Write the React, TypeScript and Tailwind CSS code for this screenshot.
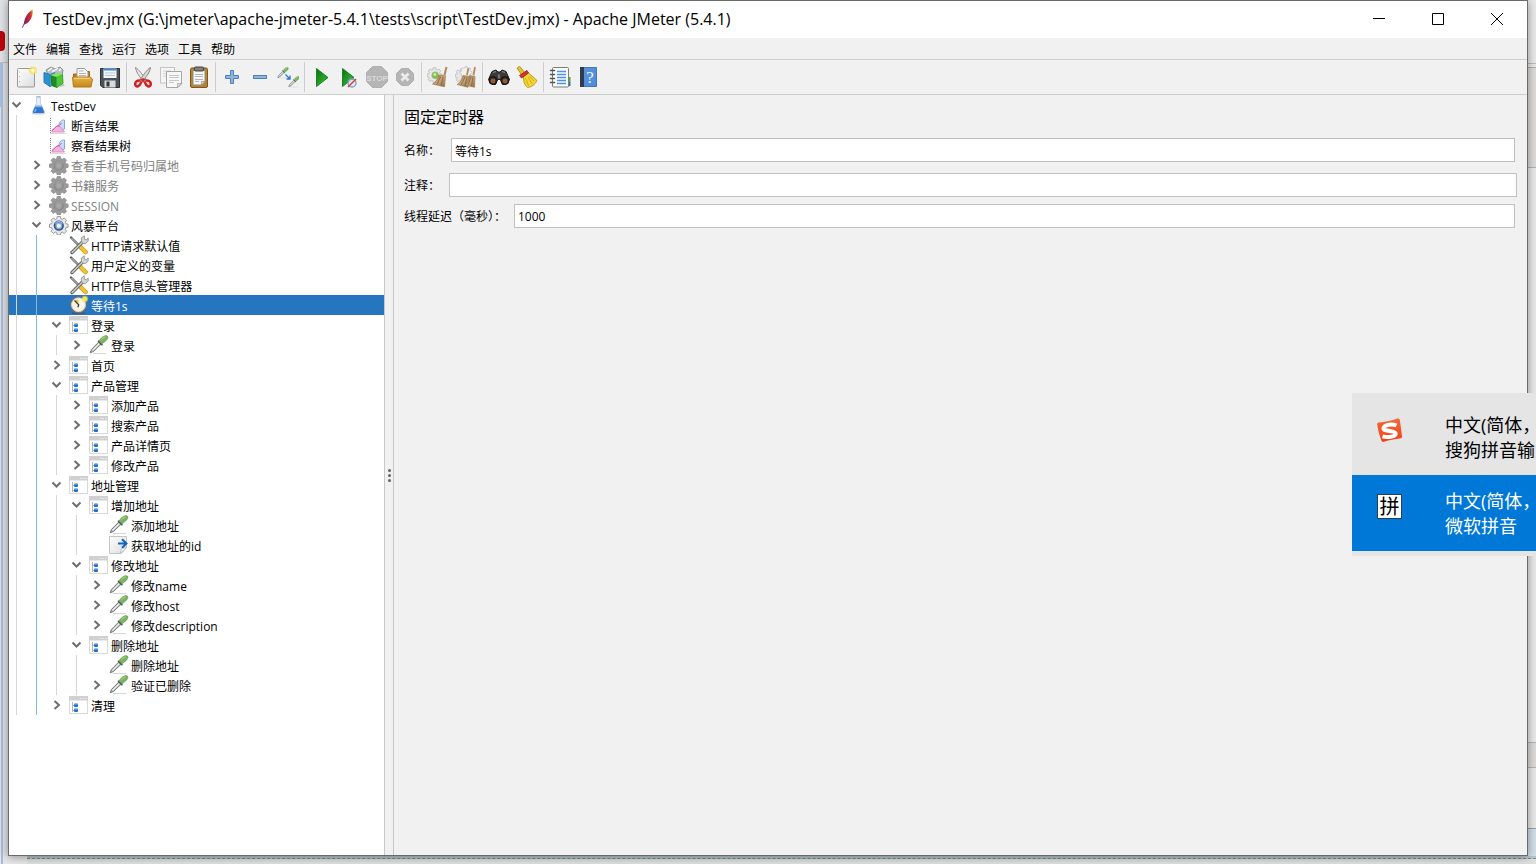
import React from 'react';

type IconName =
  | 'flask' | 'chart' | 'gear' | 'gearOff' | 'tools' | 'clock' | 'controller' | 'pipette' | 'extract';

type TreeItem = { depth: number; icon: IconName; label: string; state?: 'open' | 'closed'; off?: boolean; selected?: boolean };

const items: TreeItem[] = [
  { depth: 0, icon: 'flask', label: 'TestDev', state: 'open' },
  { depth: 1, icon: 'chart', label: '断言结果' },
  { depth: 1, icon: 'chart', label: '察看结果树' },
  { depth: 1, icon: 'gearOff', label: '查看手机号码归属地', state: 'closed', off: true },
  { depth: 1, icon: 'gearOff', label: '书籍服务', state: 'closed', off: true },
  { depth: 1, icon: 'gearOff', label: 'SESSION', state: 'closed', off: true },
  { depth: 1, icon: 'gear', label: '风暴平台', state: 'open' },
  { depth: 2, icon: 'tools', label: 'HTTP请求默认值' },
  { depth: 2, icon: 'tools', label: '用户定义的变量' },
  { depth: 2, icon: 'tools', label: 'HTTP信息头管理器' },
  { depth: 2, icon: 'clock', label: '等待1s', selected: true },
  { depth: 2, icon: 'controller', label: '登录', state: 'open' },
  { depth: 3, icon: 'pipette', label: '登录', state: 'closed' },
  { depth: 2, icon: 'controller', label: '首页', state: 'closed' },
  { depth: 2, icon: 'controller', label: '产品管理', state: 'open' },
  { depth: 3, icon: 'controller', label: '添加产品', state: 'closed' },
  { depth: 3, icon: 'controller', label: '搜索产品', state: 'closed' },
  { depth: 3, icon: 'controller', label: '产品详情页', state: 'closed' },
  { depth: 3, icon: 'controller', label: '修改产品', state: 'closed' },
  { depth: 2, icon: 'controller', label: '地址管理', state: 'open' },
  { depth: 3, icon: 'controller', label: '增加地址', state: 'open' },
  { depth: 4, icon: 'pipette', label: '添加地址' },
  { depth: 4, icon: 'extract', label: '获取地址的id' },
  { depth: 3, icon: 'controller', label: '修改地址', state: 'open' },
  { depth: 4, icon: 'pipette', label: '修改name', state: 'closed' },
  { depth: 4, icon: 'pipette', label: '修改host', state: 'closed' },
  { depth: 4, icon: 'pipette', label: '修改description', state: 'closed' },
  { depth: 3, icon: 'controller', label: '删除地址', state: 'open' },
  { depth: 4, icon: 'pipette', label: '删除地址' },
  { depth: 4, icon: 'pipette', label: '验证已删除', state: 'closed' },
  { depth: 2, icon: 'controller', label: '清理', state: 'closed' },
];

const menus = ['文件', '编辑', '查找', '运行', '选项', '工具', '帮助'];

const gearPath =
  'M8.3 1h3.4l.5 2.4 1.6.7 2.1-1.4 2.4 2.4-1.4 2.1.7 1.6 2.4.5v3.4l-2.4.5-.7 1.6 1.4 2.1-2.4 2.4-2.1-1.4-1.6.7-.5 2.4H8.3l-.5-2.4-1.6-.7-2.1 1.4-2.4-2.4 1.4-2.1-.7-1.6L0 12.7V9.300l2.400-.5.7-1.600L1.700 5.100 4.100 2.700l2.100 1.400 1.600-.7z';

function Gradients() {
  return (
    <svg width="0" height="0" className="absolute" aria-hidden="true">
      <defs>
        <linearGradient id="feather" x1="0" y1="1" x2="1" y2="0">
          <stop offset="0" stopColor="#5c2d7c" /><stop offset=".4" stopColor="#c41f45" /><stop offset=".65" stopColor="#d9302c" /><stop offset="1" stopColor="#f7a823" />
        </linearGradient>
        <linearGradient id="paper" x1="0" y1="0" x2="1" y2="1">
          <stop offset="0" stopColor="#ffffff" /><stop offset="1" stopColor="#dcdcdc" />
        </linearGradient>
        <linearGradient id="play" x1="0" y1="0" x2="1" y2="1">
          <stop offset="0" stopColor="#0c6b12" /><stop offset=".6" stopColor="#2aa52c" /><stop offset="1" stopColor="#0b7a12" />
        </linearGradient>
        <linearGradient id="folder" x1="0" y1="0" x2="0" y2="1">
          <stop offset="0" stopColor="#e9b446" /><stop offset="1" stopColor="#c4861a" />
        </linearGradient>
        <linearGradient id="broom" x1="0" y1="0" x2="1" y2="1">
          <stop offset="0" stopColor="#8f6a43" /><stop offset=".5" stopColor="#c9a578" /><stop offset="1" stopColor="#86643f" />
        </linearGradient>
        <linearGradient id="book" x1="0" y1="0" x2="1" y2="1">
          <stop offset="0" stopColor="#5c94d6" /><stop offset="1" stopColor="#4d8be0" />
        </linearGradient>
        <radialGradient id="glow">
          <stop offset="0" stopColor="#fffef0" /><stop offset=".45" stopColor="#fdf08a" /><stop offset="1" stopColor="#f6e04a" stopOpacity=".35" />
        </radialGradient>
        <linearGradient id="sogou" x1="0" y1="0" x2="0" y2="1">
          <stop offset="0" stopColor="#f4683a" /><stop offset="1" stopColor="#ee4316" />
        </linearGradient>
      </defs>
    </svg>
  );
}

function Pipette() {
  return (
    <>
      <path d="M4 18.500h13" stroke="#d5d5d5" />
      <path d="M1.200 17.800l1.200-3.300 7.300-7.400 2.300 2.200-7.500 7.200z" fill="#b4bab8" stroke="#6a706f" strokeWidth=".9" />
      <path d="M3.500 15.300l6.700-6.700" stroke="#f2f5f4" strokeWidth="1.100" />
      <path d="M9 5.800l4.400 4.400" stroke="#4c524f" strokeWidth="1.500" />
      <path d="M10.300 5.900c1.200-2.700 4.400-5.500 7.200-5.200 1.900.3 1.600 2.600.3 4.100-1.400 1.700-3.100 2.600-4.600 3.900z" fill="#7ab55f" stroke="#5c8f47" strokeWidth=".7" />
      <path d="M12.500 4.700c1.200-1.500 2.600-2.600 4-2.800" stroke="#b5dc9c" fill="none" />
    </>
  );
}

function TreeIcon({ name }: { name: IconName }) {
  return (
    <svg width="20" height="20" viewBox="0 0 20 20" className="shrink-0" aria-hidden="true">
      {name === 'flask' && (
        <>
          <ellipse cx="9.500" cy="18.300" rx="7" ry="1.200" fill="#c9c9c9" />
          <path d="M7.500 2.300h4v6l3.700 8.200q.7 1.800-1.200 1.800H5q-1.900 0-1.200-1.800L7.500 8.300z" fill="#e6eff8" stroke="#b5c6d6" strokeWidth=".7" />
          <path d="M6.300 10.800h6.400l2.400 5.600q.4 1.500-1 1.500H4.900q-1.400 0-1-1.500z" fill="#2d75cf" />
          <path d="M6.300 10.800h6.400l.6 1.400H5.700z" fill="#7fb2ec" />
          <path d="M7.100 14l-1.500 3" stroke="#8fc1f5" strokeWidth="1.200" />
          <path d="M7.500 1.700h4" stroke="#9fb2c4" strokeWidth="1.200" />
        </>
      )}
      {name === 'chart' && (
        <>
          <path d="M1.500 3v15.500" fill="none" stroke="#8a8a8a" strokeDasharray="1 1" />
          <path d="M1.500 18.500H17" fill="none" stroke="#b5b5b5" strokeDasharray="1 1" />
          <path d="M9.500 11C10.500 6.500 12.500 4.500 15.500 5v9l-2 .5c-2-.3-3.500-1.300-4-3.500z" fill="#c6dcf8" stroke="#7fa9e0" />
          <path d="M3 17v-1.500l5-4.500 3 .5 4.500 5.500z" fill="#f5b3e0" stroke="#dc7cbd" strokeWidth=".8" />
          <path d="M3 15.500l5-4.500 2.500-.5 2-2.500" fill="none" stroke="#d45aa8" />
        </>
      )}
      {(name === 'gear' || name === 'gearOff') && (
        <g transform="translate(.5 .5) scale(.93)">
          <path d={gearPath} fill={name === 'gear' ? '#e7e7e7' : '#9b9b9b'} stroke={name === 'gear' ? '#8a8a8a' : '#8f8f8f'} strokeWidth=".9" />
          <circle cx="10" cy="11" r="5.500" fill={name === 'gear' ? '#35548b' : '#8c8c8c'} />
          <circle cx="10" cy="11" r="3.700" fill={name === 'gear' ? '#7fb0e6' : '#9e9e9e'} />
          <circle cx="10" cy="11" r="2.200" fill={name === 'gear' ? '#ffffff' : '#a8a8a8'} />
          <path d="M6 8.500a5 5 0 0 1 8 0" stroke={name === 'gear' ? '#c6d3e6' : '#a5a5a5'} fill="none" />
        </g>
      )}
      {name === 'tools' && (
        <>
          <path d="M2 2.500l8 8" stroke="#5a5a5a" strokeWidth="2.400" strokeLinecap="round" />
          <path d="M2.500 3l7 7" stroke="#d5d5d5" />
          <path d="M10.500 11l6 6" stroke="#b48a18" strokeWidth="4.500" strokeLinecap="round" />
          <path d="M10.700 11l5.800 6" stroke="#f2c230" strokeWidth="3.400" strokeLinecap="round" />
          <path d="M3 17.500L14.500 6" stroke="#5c5c5c" strokeWidth="3.400" strokeLinecap="round" />
          <path d="M3.200 17.300L14.500 6" stroke="#c6c6c6" strokeWidth="1.700" strokeLinecap="round" />
          <path d="M12.500 6.500L12.300 3l3-2.200v3.300l2 .8 1.900-2v3.300L16.500 8.500l-3-.2z" fill="#d4d4d4" stroke="#8b8b8b" strokeWidth=".8" />
        </>
      )}
      {name === 'clock' && (
        <>
          <ellipse cx="9.500" cy="18" rx="7" ry="1.300" fill="#454545" opacity=".5" />
          <circle cx="9.500" cy="9.800" r="7.900" fill="#f7f4e8" stroke="#6b6b6b" strokeWidth="1.500" />
          <circle cx="9.500" cy="9.800" r="6.900" fill="none" stroke="#cfcfcf" />
          <path d="M9.500 10L5.500 5.200l4-.6z" fill="#e8c33b" />
          <path d="M5.500 5.500l4.200 4.300-.8 2.500" stroke="#3d3d3d" strokeWidth="1.300" fill="none" />
          <circle cx="15.800" cy="4" r="3.400" fill="url(#glow)" />
          <circle cx="15.800" cy="4" r="1.800" fill="#f8ea35" />
        </>
      )}
      {name === 'controller' && (
        <>
          <rect x=".5" y="2.500" width="18" height="16" fill="#ffffff" stroke="#d9d9d9" />
          <path d="M0 1h19v4.500H0z" fill="#d0d0d0" />
          <path d="M11 3.500h1.500M13.500 3.500H15M16 3.500h1.500" stroke="#ececec" />
          <path d="M3.500 7v10M3.500 10.500h2M3.500 15.500h2" stroke="#b4b4b4" fill="none" />
          <rect x="5" y="8.500" width="4" height="3.500" rx="1" fill="#1f6fd2" />
          <rect x="5" y="13.500" width="4" height="3.500" rx="1" fill="#1f6fd2" />
          <path d="M5.500 9h3M5.500 14h3" stroke="#8fbef3" />
        </>
      )}
      {name === 'pipette' && <Pipette />}
      {name === 'extract' && (
        <>
          <path d="M.5 1.500h17v11l-5 6H.5z" fill="url(#paper)" stroke="#c4c4c4" />
          <path d="M17.500 12.500l-6.500 6 1.700-5z" fill="#ffffff" stroke="#b5b5b5" strokeWidth=".8" />
          <path d="M9 8.500h8M13 4.200l4.500 4.300-4.500 4.300" stroke="#1265c4" strokeWidth="2" fill="none" />
        </>
      )}
    </svg>
  );
}

const minusBlue = <rect x="4.500" y="9.500" width="13" height="3" fill="#8fb4de" stroke="#4f7fb8" />;

const toolGroups: { label: string; disabled?: boolean; art: React.ReactNode }[][] = [
  [
    {
      label: '新建',
      art: (
        <>
          <rect x="2.500" y="2.500" width="17" height="18.500" rx="1" fill="url(#paper)" stroke="#999999" />
          <path d="M4.500 5.500v1M4.500 10v1M4.500 15v1" stroke="#b0b0b0" />
          <circle cx="18" cy="4.500" r="3.600" fill="url(#glow)" stroke="#f0dc5a" strokeWidth=".8" />
        </>
      ),
    },
    {
      label: '模板',
      art: (
        <>
          <path d="M3 4l5-3 4 2 5-2 3 3-1 6-12 3z" fill="#b8bfc4" stroke="#8a9297" />
          <path d="M5 5l4-3M11 5l4-3M9 6l4-3M16 5l2-2" stroke="#ffffff" strokeWidth="1.200" />
          <path d="M1 6.500l6 2v12l-6-4z" fill="#2b8fd0" stroke="#2478b4" />
          <path d="M7 8.500l5-2v12l-5 2z" fill="#59b2e6" stroke="#3288c0" />
          <path d="M8 9.500l6 1v11l-5-2z" fill="#1e8c22" stroke="#187a1d" />
          <path d="M13.500 10.500l6-2 .5 9-6.500 4z" fill="#4ec536" stroke="#34a52d" />
          <path d="M8 9.500l6-3 5.500 2-6 2.500z" fill="#87e062" />
          <path d="M20 18l2 1.500-6 2" fill="#bdbdbd" />
        </>
      ),
    },
    {
      label: '打开',
      art: (
        <>
          <path d="M2.500 8h5l1-2.500h10V20h-16z" fill="#b67c19" stroke="#9c6b14" />
          <path d="M6 2.500h7.500L17 6v7H6z" fill="#fafafa" stroke="#9b9b9b" />
          <path d="M8 5h4.500M8 7.500h7M8 9.500h7" stroke="#b3b3b3" />
          <path d="M1.500 11H19l2.500 2-1.500 8H2.500z" fill="url(#folder)" stroke="#b27c1a" />
          <path d="M3 12.300h15.500" stroke="#f6d583" />
        </>
      ),
    },
    {
      label: '保存',
      art: (
        <>
          <path d="M1.500 2.500h19v19H4l-2.500-2z" fill="#4d5258" stroke="#2d3034" />
          <rect x="4.500" y="2.500" width="13" height="9.500" fill="#f0f5fb" />
          <path d="M4.500 3.500h13" stroke="#4a86cc" strokeWidth="2" />
          <path d="M6 7h10M6 9.500h10" stroke="#b8c6d5" />
          <rect x="5.500" y="14.500" width="11" height="7" fill="#d9dadb" />
          <rect x="7.500" y="15.500" width="3" height="5" fill="#34383c" />
        </>
      ),
    },
  ],
  [
    {
      label: '剪切',
      art: (
        <>
          <path d="M3.500 1.500C4 6 8 12 12.500 15.500l1.500-2C10 8.500 7 3.500 3.500 1.500z" fill="#e8e8e8" stroke="#8b8b8b" />
          <path d="M18.500 1.500C18 6 14 12 9.500 15.500l-1.500-2c4-5 7-10 10.500-12z" fill="#d9d9d9" stroke="#838383" />
          <path d="M8.500 14.500c-3-.5-5 .8-5.300 3-.2 2 1.100 3.300 2.900 2.800 2.200-.6 2.500-3 3.400-4.800" fill="#f1d6d6" stroke="#cc2222" strokeWidth="2.500" />
          <path d="M13.500 14.500c3-.5 5 .8 5.300 3 .2 2-1.100 3.300-2.900 2.800-2.200-.6-2.500-3-3.400-4.800" fill="#f1d6d6" stroke="#cc2222" strokeWidth="2.500" />
          <path d="M8.500 13.500l2.500-1.500 2.500 1.500-2.500 3z" fill="#d22020" />
        </>
      ),
    },
    {
      label: '复制',
      art: (
        <>
          <rect x=".5" y="1.500" width="14" height="15.500" fill="#f5f5f5" stroke="#c4c4c4" />
          <path d="M3 5h8M3 7.500h4M3 10h4" stroke="#d0d0d0" />
          <path d="M6.500 5.500h15v12.500l-3.500 3.500H6.500z" fill="#f7f7f7" stroke="#a5a5a5" />
          <path d="M9 9.500h10M9 11.500h10M9 14.500h10M9 16.500h5" stroke="#c8c8c8" />
          <path d="M21.500 17.500h-4v4z" fill="#e1e1e1" stroke="#9b9b9b" strokeWidth=".7" />
        </>
      ),
    },
    {
      label: '粘贴',
      art: (
        <>
          <rect x="2.500" y="2" width="17" height="19.500" rx="1.500" fill="#b9832b" stroke="#7c5717" />
          <path d="M5 4.500h12v11L14 19H5z" fill="#f5f5f5" stroke="#8d8d8d" />
          <rect x="6.500" y="1" width="9" height="4" rx="1" fill="#7e8079" stroke="#44463f" />
          <path d="M7 8.500h8M7 10.500h8M7 13.500h8M7 15.500h4" stroke="#b5b5b5" />
          <path d="M17 15.500h-3.500V19z" fill="#d5d5d5" stroke="#8d8d8d" strokeWidth=".7" />
        </>
      ),
    },
  ],
  [
    {
      label: '全部展开',
      art: <path d="M9.500 4.500h3v5h5v3h-5v5h-3v-5h-5v-3h5z" fill="#8fb4de" stroke="#4f7fb8" />,
    },
    { label: '全部折叠', art: minusBlue },
    {
      label: '切换',
      art: (
        <>
          <g transform="translate(0 1) scale(.6)"><Pipette /></g>
          <g transform="translate(11 10) scale(.6)"><Pipette /></g>
          <path d="M8.500 8.500l4.500 4.500M13 9.500V13H9.500" stroke="#2f74d0" strokeWidth="1.300" fill="none" />
        </>
      ),
    },
  ],
  [
    { label: '启动', art: <path d="M6.500 2.500L18 11.500l-11.500 9z" fill="url(#play)" stroke="#1b8420" /> },
    {
      label: '不停顿开始',
      art: (
        <>
          <path d="M4.500 2.500L16 11.500l-11.500 9z" fill="url(#play)" stroke="#1b8420" />
          <circle cx="14" cy="17" r="4" fill="#dce7f5" fillOpacity=".8" stroke="#7d9cc6" strokeWidth="1.300" />
          <path d="M10 21L18 13" stroke="#d63a35" strokeWidth="1.500" />
        </>
      ),
    },
    {
      label: '停止',
      disabled: true,
      art: (
        <>
          <path d="M6.500.5h9l6 6v9l-6 6h-9l-6-6v-9z" fill="#b5b5b5" stroke="#b0b0b0" />
          <text x="11" y="14.500" textAnchor="middle" fontSize="8" fontWeight="700" fill="#dadada" fontFamily="Liberation Sans, sans-serif">STOP</text>
        </>
      ),
    },
    {
      label: '关闭',
      disabled: true,
      art: (
        <>
          <path d="M7.500 2.500h7l5 5v7l-5 5h-7l-5-5v-7z" fill="#b5b5b5" stroke="#b0b0b0" />
          <path d="M7.500 7.500l7 7M14.500 7.500l-7 7" stroke="#ebebeb" strokeWidth="2.800" />
        </>
      ),
    },
  ],
  [
    {
      label: '清除',
      art: (
        <>
          <g transform="translate(0 1) scale(.75)">
            <path d={gearPath} fill="#e6e6e6" stroke="#b3b3b3" />
            <circle cx="11" cy="11" r="4.500" fill="#7ac143" stroke="#a0b090" />
            <circle cx="10.500" cy="10" r="2" fill="#c9f09c" />
          </g>
          <path d="M19.500 1l-2 8" stroke="#b58a5c" strokeWidth="2" />
          <path d="M12 9l6.500.8-1 11-12-2.800c3.500-2 5-5 6.500-9z" fill="url(#broom)" stroke="#a07c52" strokeWidth=".7" />
          <path d="M13.500 11l-4 8M16 11l-2 9" stroke="#80603c" strokeWidth=".8" />
        </>
      ),
    },
    {
      label: '清除全部',
      art: (
        <>
          <g transform="translate(0 2) scale(.7)"><path d={gearPath} fill="#e6e6e6" stroke="#b3b3b3" /></g>
          <g transform="translate(5 0) scale(.6)"><path d={gearPath} fill="#f0f0f0" stroke="#b3b3b3" /></g>
          <path d="M13.500 2l-1.500 7M20 1l-1.500 8" stroke="#b58a5c" strokeWidth="1.800" />
          <path d="M8 9.500l6 .8-1 11-11-2.800c3.500-2 4.500-5 6-9z" fill="url(#broom)" stroke="#a07c52" strokeWidth=".7" />
          <path d="M14.500 9.500l5.500.8-.5 11-9.500-2.300c3-2 3.500-5 4.500-9z" fill="url(#broom)" stroke="#a07c52" strokeWidth=".7" />
          <path d="M10 11l-4 8M12 11l-2 9M16 11l-3 8M18 11l-1.500 9" stroke="#80603c" strokeWidth=".8" />
        </>
      ),
    },
  ],
  [
    {
      label: '查找',
      art: (
        <>
          <path d="M4 5.500l4-1.500 2 2h2l2-2 4 1.500 3.500 8-4 5h-3l-2-5h-3l-2 5h-3L.5 13.500z" fill="#3b3b3b" stroke="#1d1d1d" />
          <path d="M5 6.500l3-1M14 5.500l3 1" stroke="#8a8a8a" strokeWidth="1.300" />
          <circle cx="5" cy="14.500" r="4" fill="#2b2b2b" stroke="#111111" />
          <circle cx="17" cy="14.500" r="4" fill="#2b2b2b" stroke="#111111" />
          <circle cx="5" cy="15" r="2.400" fill="#9a5734" />
          <circle cx="17" cy="15" r="2.400" fill="#9a5734" />
          <path d="M10 8.500h2v4h-2z" fill="#757575" />
        </>
      ),
    },
    {
      label: '重置查找',
      art: (
        <>
          <path d="M1 2.200L3.500.2l5 6-3 2.300z" fill="#e7c22e" stroke="#a88408" strokeWidth=".8" />
          <path d="M7.500 10L12 6.500l9 8c-1.500 3.500-5 6.500-9.500 7-2.500-2-4.500-6-4-11.500z" fill="#f4d534" stroke="#c29d1c" />
          <path d="M9.500 12l3 7.500M12 11l4 6.500M13.500 10l4.500 5" stroke="#cfa317" strokeWidth=".9" />
          <path d="M3.500 9.500l7.500-5 1.500 2.500-7 5z" fill="#d63628" stroke="#9b1b14" strokeWidth=".8" />
        </>
      ),
    },
  ],
  [
    {
      label: '函数助手对话框',
      art: (
        <>
          <path d="M19 11h2.500v5H19z" fill="#4caf32" /><path d="M19 16h2.500v4H19z" fill="#2a72cf" />
          <rect x="3.500" y="1.500" width="16" height="19.500" rx="1" fill="#fafafa" stroke="#7c7c7c" />
          <path d="M8 5.500h9M8 8.500h9M8 11.500h9M8 14.500h9M8 17.500h9" stroke="#4b93e6" strokeWidth="1.300" />
          <path d="M1.500 4.500h4M1.500 8.500h4M1.500 12.500h4M1.500 16.500h4" stroke="#555555" strokeWidth="1.500" strokeLinecap="round" />
        </>
      ),
    },
    {
      label: '帮助',
      art: (
        <>
          <path d="M3.500 1.500h16v19h-16z" fill="url(#book)" stroke="#4a74ab" />
          <path d="M3 1h4v20H3z" fill="#2d3c50" />
          <text x="13" y="16.500" textAnchor="middle" fontSize="17" fill="#eef5ff" fontFamily="Liberation Serif, serif">?</text>
        </>
      ),
    },
  ],
];

function Tree() {
  return (
    <div role="tree" className="w-[376px] shrink-0 overflow-hidden border-r border-[#c8c8c8] bg-white">
      {items.map((item, i) => (
        <div
          key={i}
          role="treeitem"
          aria-level={item.depth + 1}
          aria-selected={!!item.selected}
          className={`flex h-5 items-start whitespace-nowrap text-xs ${item.selected ? 'bg-[#2675bf] text-white' : item.off ? 'text-[#808080]' : 'text-black'}`}
        >
          {Array.from({ length: item.depth }, (_, level) => (
            <span key={level} className="h-5 w-5 shrink-0 pl-[7px]">
              <span className={`block h-5 border-l ${level === 1 ? 'border-[#7db8ea]' : 'border-[#d6d6d6]'}`} />
            </span>
          ))}
          {item.state ? (
            <button type="button" aria-label={item.state === 'open' ? `折叠 ${item.label}` : `展开 ${item.label}`} className="h-5 w-5 shrink-0">
              <svg width="15" height="20" viewBox="0 0 15 20" fill="none" stroke="#6e6e6e" strokeWidth="2">
                <path d={item.state === 'open' ? 'M3.500 7.500l4 4 4-4' : 'M5.500 6l4.500 4-4.500 4'} />
              </svg>
            </button>
          ) : (
            <span className="w-5 shrink-0" />
          )}
          <TreeIcon name={item.icon} />
          <span className="pl-0.5 leading-6">{item.label}</span>
        </div>
      ))}
    </div>
  );
}

function Field({ id, label, value, labelClass, rowClass }: { id: string; label: string; value: string; labelClass: string; rowClass: string }) {
  return (
    <div className={`flex items-center ${rowClass}`}>
      <label htmlFor={id} className={`shrink-0 pt-0.5 text-xs whitespace-nowrap ${labelClass}`}>{label}</label>
      <input id={id} defaultValue={value} className="h-6 min-w-0 flex-1 border border-[#c0c0c0] bg-white px-[3px] pt-px text-xs text-black outline-none" />
    </div>
  );
}

function ImeSwitcher() {
  return (
    <aside aria-label="输入法" className="absolute top-[393px] right-0 z-20 w-[184px] overflow-hidden bg-[#e5e5e5] pb-[5px] text-lg leading-[25px] whitespace-nowrap">
      <button type="button" className="flex h-[82px] w-full items-start pt-5 pl-6 text-left text-black">
        <svg width="28" height="28" viewBox="0 0 28 28" className="mt-1 shrink-0" aria-hidden="true">
          <path d="M3 5.500C9 5 16 3.500 21.500 1.500c1.500-.3 2 .3 2.300 1.500 1 6 1.500 11 2.200 16 .1 1.500-.5 2.200-2 2.500-5.500.5-10.500 1.500-16 3.300-1.500.3-2.300-.2-2.700-1.500C3.500 18.500 2 13 1.200 7.500 1 6.200 1.700 5.700 3 5.500z" fill="url(#sogou)" />
          <path d="M20.500 8.300C16 6.500 8 7.500 7.500 11.300c-.3 3.500 12 2 12.200 5.300.2 3.200-8.200 4.200-13.200 2.700" fill="none" stroke="#ffffff" strokeWidth="4" />
        </svg>
        <span className="ml-[41px]">中文(简体，<br />搜狗拼音输入</span>
      </button>
      <button type="button" className="flex h-[76px] w-full items-start bg-[#0078d7] pt-3.5 pl-[25px] text-left text-white">
        <span className="mt-[5px] flex h-[25px] w-[25px] shrink-0 items-center justify-center border border-[#24405c] bg-white text-xl leading-6 text-black">拼</span>
        <span className="ml-[43px]">中文(简体，<br />微软拼音</span>
      </button>
    </aside>
  );
}

export default function App() {
  return (
    <div className="relative flex h-screen flex-col overflow-hidden bg-[#dedede] font-['Open_Sans','Noto_Sans_CJK_SC',sans-serif] text-black">
      <Gradients />
      <div className="flex min-h-0 flex-1">
        <div className="flex w-2 shrink-0 flex-col bg-[#e2e3e6]">
          <div className="h-[31px]" />
          <div className="h-5 w-[5px] rounded-r bg-[#b9060c]" />
          <div className="h-3 border-b border-[#c4c4c4]" />
          <div className="h-11 w-[3px] bg-[#a9bfe0]" />
          <div className="ml-px w-0.5 flex-1 bg-[#a9bcdc]" />
        </div>

        <main className="z-10 flex min-w-0 flex-1 flex-col border border-[#696b6b] bg-[#f1f1f1] shadow-[0_1px_9px_rgba(0,0,0,0.4)]">
          <header className="flex h-[37px] shrink-0 items-center bg-white pr-px pb-0.5 pl-2.5">
            <svg width="16" height="22" viewBox="0 0 16 22" className="shrink-0" aria-hidden="true">
              <path d="M13.500 1.500c1 4.500-1.300 10.500-5 13.500l-3.500 1.700C4.500 11.500 8.500 4 13.500 1.500z" fill="url(#feather)" />
              <path d="M12 4C9.500 7.500 6 13 3.300 19.800" stroke="#6b2e6e" fill="none" strokeWidth=".9" />
            </svg>
            <h1 className="min-w-0 flex-1 truncate pl-2 text-base">TestDev.jmx (G:\jmeter\apache-jmeter-5.4.1\tests\script\TestDev.jmx) - Apache JMeter (5.4.1)</h1>
            {[
              { label: '最小化', d: 'M0 5.500h12' },
              { label: '最大化', d: 'M.5.500h11v11H.5z' },
              { label: '关闭窗口', d: 'M0 0l12 12M12 0L0 12' },
            ].map((c) => (
              <button key={c.label} type="button" aria-label={c.label} className="flex h-full w-[59px] shrink-0 items-center justify-center">
                <svg width="12" height="12" viewBox="0 0 12 12" fill="none" stroke="#000000"><path d={c.d} /></svg>
              </button>
            ))}
          </header>

          <nav className="flex h-[22px] shrink-0 items-start gap-[9px] border-b border-[#cdcdcd] pl-1 text-xs">
            {menus.map((m) => (
              <button key={m} type="button" className="leading-6 whitespace-nowrap">{m}</button>
            ))}
          </nav>

          <div role="toolbar" className="flex h-[35px] shrink-0 items-center border-b border-[#cdcdcd] pl-[3px]">
            {toolGroups.map((group, gi) => (
              <div key={gi} className="flex items-center">
                {gi > 0 && <span className="mx-0.5 h-[30px] border-l border-[#cdcdcd]" />}
                {group.map((tool) => (
                  <button key={tool.label} type="button" aria-label={tool.label} disabled={tool.disabled} className="flex h-7 w-7 items-center justify-center">
                    <svg width="22" height="22" viewBox="0 0 22 22" fill="none" aria-hidden="true">{tool.art}</svg>
                  </button>
                ))}
              </div>
            ))}
          </div>

          <div className="flex min-h-0 flex-1">
            <Tree />
            <div className="flex w-[9px] shrink-0 flex-col items-center justify-center gap-0.5 border-r border-[#c8c8c8]">
              <span className="h-[3px] w-[3px] rounded-full bg-[#626262]" />
              <span className="h-[3px] w-[3px] rounded-full bg-[#626262]" />
              <span className="h-[3px] w-[3px] rounded-full bg-[#626262]" />
            </div>
            <section className="min-w-0 flex-1 pt-2.5 pl-2.5">
              <h2 className="text-base leading-6 font-normal">固定定时器</h2>
              <Field id="name" label="名称：" value="等待1s" labelClass="w-[47px]" rowClass="mt-[9px] pr-3" />
              <Field id="comment" label="注释：" value="" labelClass="w-[45px]" rowClass="mt-[11px] pr-2.5" />
              <Field id="delay" label="线程延迟（毫秒）：" value="1000" labelClass="w-[110px]" rowClass="mt-[7px] pr-3" />
            </section>
          </div>
        </main>

        <div className="flex w-2 shrink-0 flex-col bg-[#eaeaea]">
          <div className="h-16 border-b border-[#bcbcbc]" />
          <div className="h-1 border-b border-[#b0b0b0]" />
          <div className="h-[100px] border-b border-[#b5b5b5] bg-[#dedddb]" />
          <div className="flex-1 border-b border-[#b5b5b5]" />
          <div className="h-[25px] border-b border-[#b5b5b5] bg-[#dddcda]" />
          <div className="h-[61px] border-b border-[#9c9c9c]" />
          <div className="h-[27px] bg-[#d3dfea]" />
        </div>
      </div>
      <div className="flex h-2 shrink-0">
        <div className="w-[27px] bg-[#e8e8e8]"><div className="ml-px h-2 w-0.5 bg-[#a9bcdc]" /></div>
        <div className="flex-1 bg-[#e0e0e0]">
          <div className="h-[3px] border-b border-dashed border-[#7f8b90] bg-[#b9c7cc]" />
        </div>
      </div>
      <ImeSwitcher />
    </div>
  );
}
